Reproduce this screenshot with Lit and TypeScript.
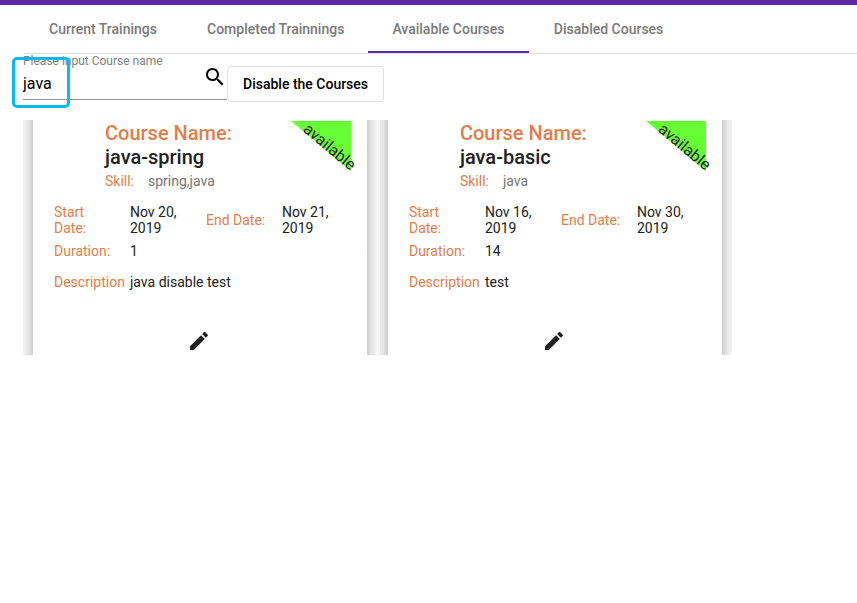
import { LitElement, html, css } from "lit";
import { customElement, property, state } from "lit/decorators.js";
import { classMap } from "lit/directives/class-map.js";

interface Course {
  name: string;
  skill: string;
  start: string;
  end: string;
  duration: number;
  description: string;
}

const COURSES: Course[] = [
  { name: "java-spring", skill: "spring,java", start: "Nov 20, 2019", end: "Nov 21, 2019", duration: 1, description: "java disable test" },
  { name: "java-basic", skill: "java", start: "Nov 16, 2019", end: "Nov 30, 2019", duration: 14, description: "test" },
];

const TABS = ["Current Trainings", "Completed Trainnings", "Available Courses", "Disabled Courses"];

@customElement("course-card")
export class CourseCard extends LitElement {
  @property({ attribute: false }) course!: Course;

  static styles = css`
    :host {
      display: block;
    }
    .card {
      display: grid;
      grid-template-columns: 10px minmax(0, 1fr) 10px;
      color: #212121;
      font-size: 14px;
      line-height: 16px;
    }
    .edge {
      background: linear-gradient(to left, #cccccc, #e6e6e6 50%, #f3f3f3);
    }
    .edge.right {
      background: linear-gradient(to right, #cccccc, #e6e6e6 50%, #f3f3f3);
    }
    .body {
      display: flex;
      flex-direction: column;
      padding: 1px 16px 0 21px;
    }
    .top {
      display: flex;
      justify-content: space-between;
      padding-left: 51px;
    }
    .title {
      margin: 0;
      font-size: 20px;
      font-weight: 500;
      line-height: 24px;
    }
    .title span {
      display: block;
    }
    .label {
      color: #e57c4a;
    }
    .skill {
      display: flex;
      gap: 14px;
      margin: 0;
      line-height: 24px;
      color: #757575;
    }
    .ribbon {
      position: relative;
      width: 60px;
      height: 50px;
    }
    .ribbon svg {
      display: block;
    }
    .ribbon span {
      position: absolute;
      left: 7px;
      top: 16px;
      font-size: 16px;
      line-height: 20px;
      transform: rotate(40deg);
    }
    .facts {
      display: grid;
      grid-template-columns: repeat(4, 60px);
      column-gap: 16px;
      align-items: center;
      margin: 11px 0 0;
    }
    .facts dt,
    .facts dd {
      margin: 0;
    }
    .facts .line {
      line-height: 31px;
    }
    .facts .wide {
      grid-column: span 3;
    }
    .actions {
      display: flex;
      justify-content: center;
      padding: 31px 6px 2px 0;
    }
    .edit {
      display: flex;
      padding: 0;
      border: 0;
      background: none;
      color: inherit;
      cursor: pointer;
    }
  `;

  render() {
    const c = this.course;
    return html`
      <article class="card">
        <div class="edge"></div>
        <div class="body">
          <div class="top">
            <div>
              <h2 class="title"><span class="label">Course Name:</span><span>${c.name}</span></h2>
              <p class="skill"><span class="label">Skill:</span><span>${c.skill}</span></p>
            </div>
            <div class="ribbon">
              <svg width="60" height="50" viewBox="0 0 60 50" aria-hidden="true"><path d="M0 0H60V50Z" fill="#66ff33" /></svg>
              <span>available</span>
            </div>
          </div>
          <dl class="facts">
            <dt class="label">Start Date:</dt>
            <dd>${c.start}</dd>
            <dt class="label">End Date:</dt>
            <dd>${c.end}</dd>
            <dt class="label line">Duration:</dt>
            <dd class="line wide">${c.duration}</dd>
            <dt class="label line">Description</dt>
            <dd class="line wide">${c.description}</dd>
          </dl>
          <div class="actions">
            <button class="edit" aria-label="Edit ${c.name}">
              <svg width="24" height="24" viewBox="0 0 24 24" fill="currentColor" aria-hidden="true">
                <path d="M3 17.25V21h3.75L17.81 9.94l-3.75-3.75L3 17.25zM20.71 7.04c.39-.39.39-1.02 0-1.41l-2.34-2.34c-.39-.39-1.02-.39-1.41 0l-1.83 1.83 3.75 3.75 1.83-1.83z" />
              </svg>
            </button>
          </div>
        </div>
        <div class="edge right"></div>
      </article>
    `;
  }
}

@customElement("app-root")
export class AppRoot extends LitElement {
  @state() private active = 2;
  @state() private query = "java";

  static styles = css`
    :host {
      display: block;
      min-height: 100vh;
      border-top: 5px solid #5f2aa8;
      box-sizing: border-box;
      background: #ffffff;
      font-family: Roboto, "Liberation Sans", sans-serif;
    }
    .page {
      padding-left: 23px;
    }
    .tabs {
      display: flex;
      border-bottom: 1px solid #e0e0e0;
    }
    .tab {
      min-width: 160px;
      height: 48px;
      padding: 2px 24px 0;
      border: 0;
      border-bottom: 2px solid transparent;
      background: none;
      color: #7a7a7a;
      font: 500 14px Roboto, "Liberation Sans", sans-serif;
      white-space: nowrap;
      cursor: pointer;
    }
    .tab.active {
      border-bottom-color: #5f2aa8;
    }
    .search {
      display: flex;
      align-items: flex-start;
    }
    .field {
      position: relative;
      display: grid;
      grid-template-columns: minmax(0, 1fr);
      width: 204px;
      border-bottom: 1px solid #949494;
    }
    .caption {
      color: #808080;
      font-size: 12px;
      line-height: 14px;
    }
    .entry {
      display: flex;
      align-items: flex-start;
      height: 31px;
    }
    .input {
      flex: 1;
      min-width: 0;
      height: 31px;
      padding: 0;
      border: 0;
      outline: 0;
      background: none;
      color: #000000;
      font: 16px Roboto, "Liberation Sans", sans-serif;
    }
    .find {
      display: flex;
      margin-top: -3px;
      padding: 0;
      border: 0;
      background: none;
      color: #000000;
      cursor: pointer;
    }
    .focus {
      position: absolute;
      left: -11px;
      top: 3px;
      width: 58px;
      height: 51px;
      box-sizing: border-box;
      border: 3px solid #06b9fb;
      border-radius: 5px;
      pointer-events: none;
    }
    .disable {
      height: 36px;
      margin-top: 12px;
      padding: 0 15px;
      border: 1px solid #e0e0e0;
      border-radius: 4px;
      background: #ffffff;
      color: #000000;
      font: 500 14px Roboto, "Liberation Sans", sans-serif;
      cursor: pointer;
    }
    .cards {
      display: grid;
      grid-template-columns: repeat(auto-fill, minmax(320px, 1fr));
      column-gap: 1px;
      width: 85%;
      margin-top: 18px;
    }
  `;

  render() {
    const shown = COURSES.filter((c) => c.name.includes(this.query));
    return html`
      <div class="page">
        <div class="tabs" role="tablist">
          ${TABS.map(
            (label, i) => html`<button
              class=${classMap({ tab: true, active: i === this.active })}
              role="tab"
              aria-selected=${i === this.active ? "true" : "false"}
              @click=${() => (this.active = i)}
            >${label}</button>`
          )}
        </div>
        <div class="search">
          <div class="field">
            <label class="caption" for="course">Please input Course name</label>
            <div class="entry">
              <input
                class="input"
                id="course"
                type="text"
                .value=${this.query}
                @input=${(e: InputEvent) => (this.query = (e.target as HTMLInputElement).value)}
              />
              <button class="find" aria-label="Search">
                <svg width="24" height="24" viewBox="0 0 24 24" fill="currentColor" aria-hidden="true">
                  <path d="M15.5 14h-.79l-.28-.27C15.41 12.59 16 11.11 16 9.5 16 5.91 13.09 3 9.5 3S3 5.91 3 9.5 5.91 16 9.5 16c1.61 0 3.09-.59 4.23-1.57l.27.28v.79l5 4.99L20.49 19l-4.99-5zm-6 0C7.01 14 5 11.99 5 9.5S7.01 5 9.5 5 14 7.01 14 9.5 11.99 14 9.5 14z" />
                </svg>
              </button>
            </div>
            <div class="focus"></div>
          </div>
          <button class="disable">Disable the Courses</button>
        </div>
        <main class="cards">
          ${shown.map((c) => html`<course-card .course=${c}></course-card>`)}
        </main>
      </div>
    `;
  }
}
